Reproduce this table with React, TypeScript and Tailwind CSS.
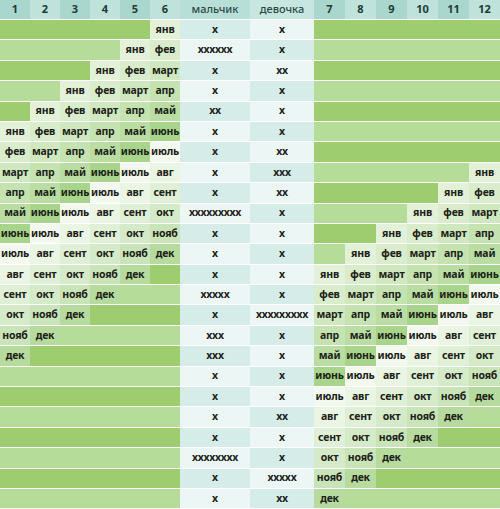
import React from 'react';

const months = ['янв', 'фев', 'март', 'апр', 'май', 'июнь', 'июль', 'авг', 'сент', 'окт', 'нояб', 'дек'];

// tint per month: first half-year light -> green, second half restarts almost white
const monthBg = [
  'bg-[#e3f1d8]', 'bg-[#d9edcc]', 'bg-[#cfe8bf]', 'bg-[#c5e3b1]', 'bg-[#b9dda2]', 'bg-[#a8d48b]',
  'bg-[#f3f9ef]', 'bg-[#eaf5e3]', 'bg-[#e0f0d6]', 'bg-[#d5eac8]', 'bg-[#c9e4b8]', 'bg-[#b7db9e]',
];

const boy = ['x', 'xxxxxx', 'x', 'x', 'xx', 'x', 'x', 'x', 'x', 'xxxxxxxxx', 'x', 'x', 'x', 'xxxxx', 'x', 'xxx', 'xxx', 'x', 'x', 'x', 'x', 'xxxxxxxx', 'x', 'x'];
const girl = ['x', 'x', 'xx', 'x', 'x', 'x', 'xx', 'xxx', 'xx', 'x', 'x', 'x', 'x', 'x', 'xxxxxxxxx', 'x', 'x', 'x', 'x', 'xx', 'x', 'x', 'xxxxx', 'xx'];

const font = { fontFamily: '"Noto Sans", "Open Sans", sans-serif' };

const MonthCell = ({ m, dark }: { m: number; dark: boolean }) => {
  if (m < 0 || m > 11) {
    return <div className={dark ? 'bg-[#9ecd70]' : 'bg-[#b5dc98]'} />;
  }
  return (
    <div className={`${monthBg[m]} flex items-center justify-center text-[10.5px] font-bold tracking-[-0.2px] text-[#1c2218] whitespace-nowrap`}>
      {months[m]}
    </div>
  );
};

const App = () => {
  const cols = [0, 1, 2, 3, 4, 5];
  return (
    <div className="w-[500px] h-[509px] bg-white overflow-hidden" style={font}>
      <div className="grid grid-cols-[repeat(6,30px)_70px_64px_repeat(6,31px)] h-[19px] text-[11px] font-bold text-[#1d3b38]">
        {cols.map((c) => (
          <div key={c} className={`${c % 2 === 0 ? 'bg-[#a9d6cd]' : 'bg-[#bfe2da]'} flex items-center justify-center`}>
            {c + 1}
          </div>
        ))}
        <div className="bg-[#b8dfd7] flex items-center justify-center font-medium text-[#2b4a46]">мальчик</div>
        <div className="bg-[#c6e6df] flex items-center justify-center font-medium text-[#2b4a46]">девочка</div>
        {cols.map((c) => (
          <div key={c} className={`${c % 2 === 0 ? 'bg-[#a9d6cd]' : 'bg-[#bfe2da]'} flex items-center justify-center`}>
            {c + 7}
          </div>
        ))}
      </div>
      {boy.map((b, r) => {
        const dark = r % 2 === 0;
        return (
          <div key={r} className="grid grid-cols-[repeat(6,30px)_70px_64px_repeat(6,31px)] h-[20.4px] border-t border-[#ffffff]/25">
            {cols.map((c) => (
              <MonthCell key={c} m={c + r - 5} dark={dark} />
            ))}
            <div className={`${dark ? 'bg-[#d6ece8]' : 'bg-[#ecf6f4]'} flex items-center justify-center text-[10.5px] font-bold text-[#1c2220] tracking-[-0.3px]`}>
              {b}
            </div>
            <div className={`${dark ? 'bg-[#ecf6f4]' : 'bg-[#d6ece8]'} flex items-center justify-center text-[10.5px] font-bold text-[#1c2220] tracking-[-0.3px]`}>
              {girl[r]}
            </div>
            {cols.map((c) => (
              <MonthCell key={c} m={c + r - 12} dark={dark} />
            ))}
          </div>
        );
      })}
    </div>
  );
};

export default App;
